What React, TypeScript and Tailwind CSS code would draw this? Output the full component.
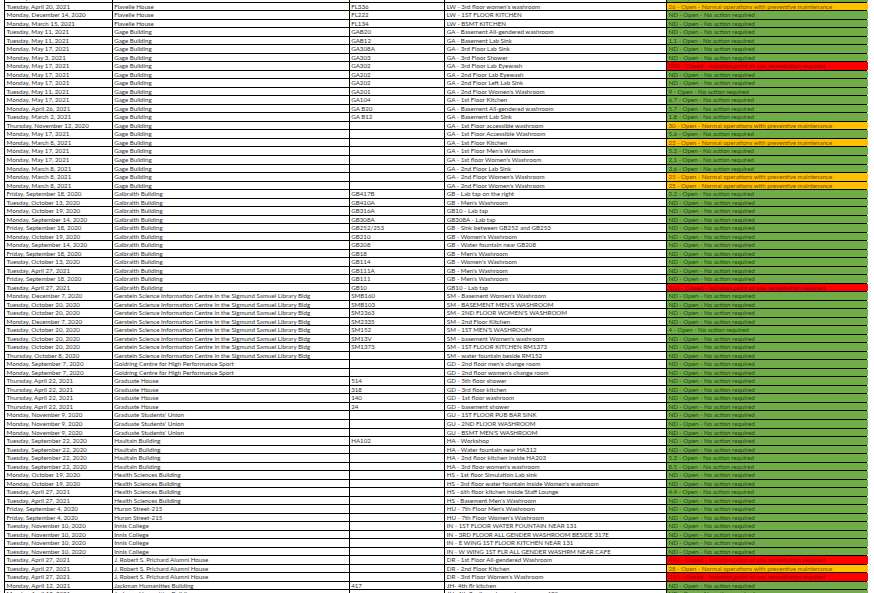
const FH = "Flavelle House";
const GA = "Gage Building";
const GB = "Galbraith Building";
const SM = "Gerstein Science Information Centre in the Sigmund Samuel Library Bldg";
const GD = "Goldring Centre for High Performance Sport";
const GH = "Graduate House";
const GSU = "Graduate Students' Union";
const HA = "Haultain Building";
const HS = "Health Sciences Building";
const HU = "Huron Street-215";
const IN = "Innis College";
const JR = "J. Robert S. Prichard Alumni House";
const JH = "Jackman Humanities Building";

type Row = [string, string, string, string, string];

const rows: Row[] = [
  ["Tuesday, October 27, 2020", "Fields Inst for Research in Math Science", "", "2ND FLOOR WATER FOUNTAIN NEAR 200", "ND"],
  ["Tuesday, April 20, 2021", FH, "FL336", "LW - 3rd floor women's washroom", "26"],
  ["Monday, December 14, 2020", FH, "FL222", "LW - 1ST FLOOR KITCHEN", "ND"],
  ["Monday, March 15, 2021", FH, "FL134", "LW - BSMT KITCHEN", "ND"],
  ["Tuesday, May 11, 2021", GA, "GAB20", "GA - Basement All-gendered washroom", "ND"],
  ["Tuesday, May 11, 2021", GA, "GAB12", "GA - Basement Lab Sink", "1.1"],
  ["Monday, May 17, 2021", GA, "GA308A", "GA - 3rd Floor Lab Sink", "ND"],
  ["Monday, May 3, 2021", GA, "GA303", "GA - 3rd Floor Shower", "ND"],
  ["Monday, May 17, 2021", GA, "GA302", "GA - 3rd Floor Lab Eyewash", "390"],
  ["Monday, May 17, 2021", GA, "GA202", "GA - 2nd Floor Lab Eyewash", "ND"],
  ["Monday, May 17, 2021", GA, "GA202", "GA - 2nd Floor Left Lab Sink", "ND"],
  ["Tuesday, May 11, 2021", GA, "GA201", "GA - 2nd Floor Women's Washroom", "9"],
  ["Monday, May 17, 2021", GA, "GA104", "GA - 1st Floor Kitchen", "6.7"],
  ["Monday, April 26, 2021", GA, "GA B20", "GA - Basement All-gendered washroom", "5.7"],
  ["Tuesday, March 2, 2021", GA, "GA B12", "GA - Basement Lab Sink", "1.8"],
  ["Thursday, November 12, 2020", GA, "", "GA - 1st Floor accessible washroom", "30"],
  ["Monday, May 17, 2021", GA, "", "GA - 1st Floor Accessible Washroom", "5.6"],
  ["Monday, March 8, 2021", GA, "", "GA - 1st Floor Kitchen", "23"],
  ["Monday, May 17, 2021", GA, "", "GA - 1st Floor Men's Washroom", "5.2"],
  ["Monday, May 17, 2021", GA, "", "GA - 1st floor Women's Washroom", "2.1"],
  ["Monday, March 8, 2021", GA, "", "GA - 2nd Floor Lab Sink", "3.6"],
  ["Monday, March 8, 2021", GA, "", "GA - 2nd Floor Women's Washroom", "25"],
  ["Monday, March 8, 2021", GA, "", "GA - 2nd Floor Women's Washroom", "25"],
  ["Friday, September 18, 2020", GB, "GB417B", "GB - Lab tap on the right", "2.2"],
  ["Tuesday, October 13, 2020", GB, "GB410A", "GB - Men's Washroom", "ND"],
  ["Monday, October 19, 2020", GB, "GB316A", "GB10 - Lab tap", "ND"],
  ["Monday, September 14, 2020", GB, "GB308A", "GB308A - Lab tap", "ND"],
  ["Friday, September 18, 2020", GB, "GB252/253", "GB - Sink between GB252 and GB253", "ND"],
  ["Monday, October 19, 2020", GB, "GB210", "GB - Women's Washroom", "ND"],
  ["Monday, September 14, 2020", GB, "GB208", "GB - Water fountain near GB208", "ND"],
  ["Friday, September 18, 2020", GB, "GB18", "GB - Men's Washroom", "ND"],
  ["Tuesday, October 13, 2020", GB, "GB114", "GB - Women's Washroom", "ND"],
  ["Tuesday, April 27, 2021", GB, "GB111A", "GB - Men's Washroom", "ND"],
  ["Friday, September 18, 2020", GB, "GB111", "GB - Men's Washroom", "ND"],
  ["Tuesday, April 27, 2021", GB, "GB10", "GB10 - Lab tap", "350"],
  ["Monday, December 7, 2020", SM, "SMB160", "SM - Basement Women's Washroom", "ND"],
  ["Tuesday, October 20, 2020", SM, "SMB103", "SM - BASEMENT MEN'S WASHROOM", "ND"],
  ["Tuesday, October 20, 2020", SM, "SM2363", "SM - 2ND FLOOR WOMEN'S WASHROOM", "ND"],
  ["Monday, December 7, 2020", SM, "SM2335", "SM - 2nd Floor Kitchen", "ND"],
  ["Tuesday, October 20, 2020", SM, "SM152", "SM - 1ST MEN'S WASHROOM", "4"],
  ["Tuesday, October 20, 2020", SM, "SM13V", "SM - basement Women's washroom", "ND"],
  ["Tuesday, October 20, 2020", SM, "SM1373", "SM - 1ST FLOOR KITCHEN RM1373", "ND"],
  ["Thursday, October 8, 2020", SM, "", "SM - water fountain beside RM152", "ND"],
  ["Monday, September 7, 2020", GD, "", "GD - 2nd floor men's change room", "ND"],
  ["Monday, September 7, 2020", GD, "", "GD - 2nd floor women's change room", "ND"],
  ["Thursday, April 22, 2021", GH, "514", "GD - 5th floor shower", "ND"],
  ["Thursday, April 22, 2021", GH, "318", "GD - 3rd floor kitchen", "ND"],
  ["Thursday, April 22, 2021", GH, "140", "GD - 1st floor washroom", "ND"],
  ["Thursday, April 22, 2021", GH, "24", "GD - basement shower", "ND"],
  ["Monday, November 9, 2020", GSU, "", "GU - 1ST FLOOR PUB BAR SINK", "ND"],
  ["Monday, November 9, 2020", GSU, "", "GU - 2ND FLOOR WASHROOM", "ND"],
  ["Monday, November 9, 2020", GSU, "", "GU - BSMT MEN'S WASHROOM", "ND"],
  ["Tuesday, September 22, 2020", HA, "HA102", "HA - Workshop", "ND"],
  ["Tuesday, September 22, 2020", HA, "", "HA -  Water fountain near HA312", "ND"],
  ["Tuesday, September 22, 2020", HA, "", "HA - 2nd floor kitchen inside HA203", "5.3"],
  ["Tuesday, September 22, 2020", HA, "", "HA - 3rd floor women's washroom", "8.5"],
  ["Monday, October 19, 2020", HS, "", "HS - 1st floor Simulation Lab sink", "ND"],
  ["Monday, October 19, 2020", HS, "", "HS - 3rd floor water fountain inside Women's washroom", "ND"],
  ["Tuesday, April 27, 2021", HS, "", "HS - 6th floor kitchen inside Staff Lounge", "4.4"],
  ["Tuesday, April 27, 2021", HS, "", "HS - Basement Men's Washroom", "ND"],
  ["Friday, September 4, 2020", HU, "", "HU - 7th Floor Men's Washroom", "ND"],
  ["Friday, September 4, 2020", HU, "", "HU - 7th Floor Women's Washroom", "ND"],
  ["Tuesday, November 10, 2020", IN, "", "IN - 1ST FLOOR WATER FOUNTAIN NEAR 131", "ND"],
  ["Tuesday, November 10, 2020", IN, "", "IN - 3RD FLOOR ALL GENDER WASHROOM BESIDE 317E", "ND"],
  ["Tuesday, November 10, 2020", IN, "", "IN - E WING 1ST FLOOR KITCHEN NEAR 131", "ND"],
  ["Tuesday, November 10, 2020", IN, "", "IN - W WING 1ST FLR ALL GENDER WASHRM NEAR CAFE", "ND"],
  ["Tuesday, April 27, 2021", JR, "", "DR - 1st Floor All-gendered Washroom", "490"],
  ["Tuesday, April 27, 2021", JR, "", "DR - 2nd Floor Kitchen", "28"],
  ["Tuesday, April 27, 2021", JR, "", "DR - 3rd Floor Women's Washroom", "210"],
  ["Monday, April 12, 2021", JH, "417", "JH- 4th flr kitchen", "ND"],
  ["Monday, April 12, 2021", JH, "", "JH- 4th flr all gender washroom near 420", "ND"],
];

// lead result -> cell colour + label
function status(code: string) {
  const n = code === "ND" ? 0 : parseFloat(code);
  if (n >= 100)
    return {
      label: `${code} - Closed - Isolation,point of use, remediation required`,
      cls: "bg-[#ff0000] text-[#8a0006]",
    };
  if (n >= 20)
    return {
      label: `${code} - Open - Normal operations with preventive maintenance`,
      cls: "bg-[#ffc000] text-[#7a4a00]",
    };
  return { label: `${code} - Open - No action required`, cls: "bg-[#70ad47] text-[#1a4510]" };
}

const cell = "border-r border-black pl-[1.5px] overflow-hidden whitespace-nowrap";

export default function App() {
  return (
    <div className="min-h-screen bg-white font-['Lato',sans-serif] text-[6.2px] leading-[7.5px] text-[#333333]">
      {/* sheet is scrolled a few px, so the first row is partly hidden */}
      <div className="-mt-[5.8px] ml-[4px] w-[863px]">
        {rows.map((r, i) => {
          const s = status(r[4]);
          return (
            <div
              key={i}
              className="grid h-[8.53px] grid-cols-[107.7px_237px_95.6px_221.7px_201px] border-b border-l border-black"
            >
              <div className={cell}>{r[0]}</div>
              <div className={cell}>{r[1]}</div>
              <div className={cell}>{r[2]}</div>
              <div className={cell}>{r[3]}</div>
              <div className={`pl-[1.5px] overflow-hidden whitespace-nowrap ${s.cls}`}>{s.label}</div>
            </div>
          );
        })}
      </div>
    </div>
  );
}
